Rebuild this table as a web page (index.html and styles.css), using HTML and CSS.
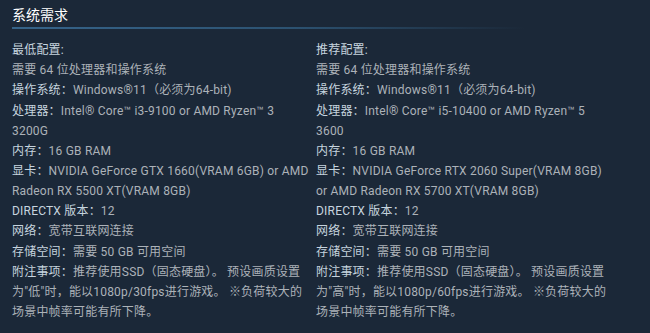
FILE: index.html
```html
<!DOCTYPE html>
<html lang="zh-CN">
<head>
<meta charset="utf-8">
<link rel="stylesheet" href="styles.css">
</head>
<body>
<div class="sysreq">
  <h2 class="title">系统需求</h2>
  <div class="cols">
    <ul class="col">
      <li class="head">最低配置:</li>
      <li>需要 64 位处理器和操作系统</li>
      <li><span class="lbl">操作系统：</span>Windows®11（必须为64-bit)</li>
      <li><span class="lbl">处理器：</span>Intel® Core™ i3-9100 or AMD Ryzen™ 3 3200G</li>
      <li><span class="lbl">内存：</span>16 GB RAM</li>
      <li><span class="lbl">显卡：</span>NVIDIA GeForce GTX 1660(VRAM 6GB) or AMD Radeon RX 5500 XT(VRAM 8GB)</li>
      <li><span class="lbl">DIRECTX 版本：</span>12</li>
      <li><span class="lbl">网络：</span>宽带互联网连接</li>
      <li><span class="lbl">存储空间：</span>需要 50 GB 可用空间</li>
      <li><span class="lbl">附注事项：</span>推荐使用SSD（固态硬盘）。 预设画质设置为"低"时，能以1080p/30fps进行游戏。 ※负荷较大的场景中帧率可能有所下降。</li>
    </ul>
    <ul class="col">
      <li class="head">推荐配置:</li>
      <li>需要 64 位处理器和操作系统</li>
      <li><span class="lbl">操作系统：</span>Windows®11（必须为64-bit)</li>
      <li><span class="lbl">处理器：</span>Intel® Core™ i5-10400 or AMD Ryzen™ 5 3600</li>
      <li><span class="lbl">内存：</span>16 GB RAM</li>
      <li><span class="lbl">显卡：</span>NVIDIA GeForce RTX 2060 Super(VRAM 8GB) or AMD Radeon RX 5700 XT(VRAM 8GB)</li>
      <li><span class="lbl">DIRECTX 版本：</span>12</li>
      <li><span class="lbl">网络：</span>宽带互联网连接</li>
      <li><span class="lbl">存储空间：</span>需要 50 GB 可用空间</li>
      <li><span class="lbl">附注事项：</span>推荐使用SSD（固态硬盘）。 预设画质设置为"高"时，能以1080p/60fps进行游戏。 ※负荷较大的场景中帧率可能有所下降。</li>
    </ul>
  </div>
</div>
</body>
</html>
```
FILE: styles.css
```css
html, body {
  margin: 0;
  padding: 0;
  background: #1b2838;
}
body {
  font-family: Roboto, "Noto Sans CJK SC", sans-serif;
  font-size: 12px;
  letter-spacing: 0.2px;
  color: #acb2b8;
}
.sysreq {
  padding: 6px 12px 0 12px;
}
.title {
  margin: 0;
  font-size: 14px;
  font-weight: normal;
  letter-spacing: 0;
  color: #ffffff;
  line-height: 18px;
  padding-bottom: 3px;
}
.title::after {
  content: "";
  display: block;
  height: 2px;
  margin-top: 3px;
  width: 100%;
  background: linear-gradient(to right, #36648a 0%, #2c5271 45%, rgba(27,40,56,0) 82%);
}
.cols {
  display: grid;
  grid-template-columns: 297px 297px;
  column-gap: 7px;
  margin-top: 8px;
}
.col {
  list-style: none;
  margin: 0;
  padding: 0;
}
.col li {
  line-height: 20px;
  margin-bottom: 0.2px;
}
.col li.head {
  color: #c6d4df;
}
.lbl {
  color: #c6d4df;
}
```
